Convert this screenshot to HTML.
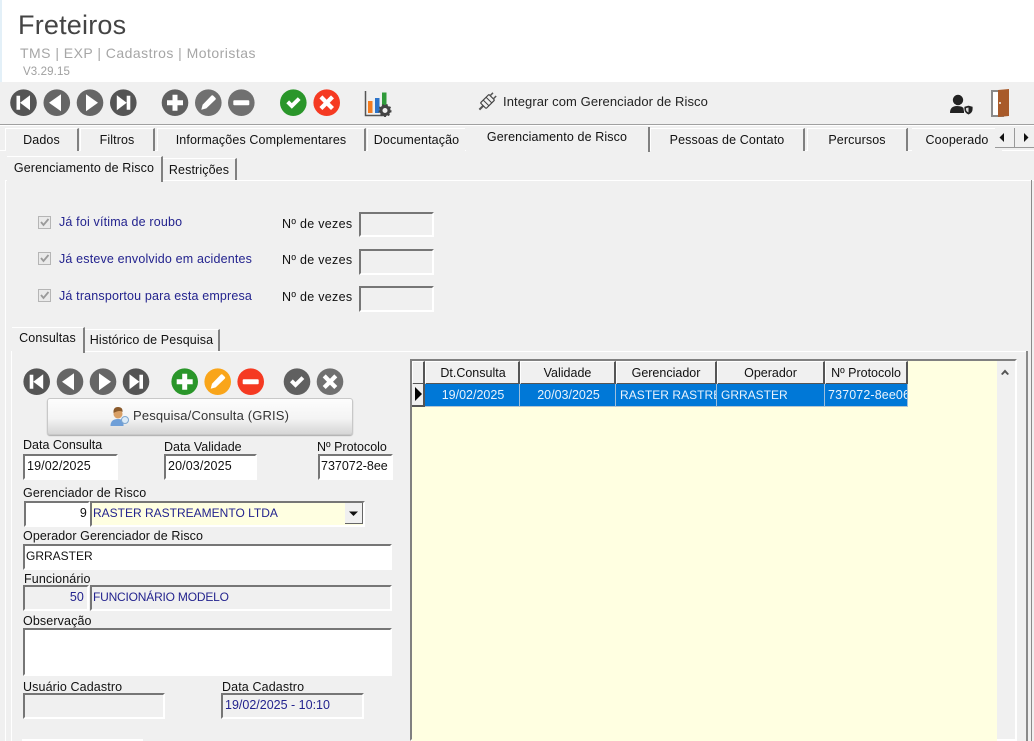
<!DOCTYPE html>
<html lang="pt"><head><meta charset="utf-8"><title>Freteiros</title>
<style>
html,body{margin:0;padding:0;background:#f0f0f0}
#p{position:relative;width:1034px;height:741px;overflow:hidden;background:#f0f0f0;font:12.5px "Liberation Sans",sans-serif;letter-spacing:.12px;color:#111;filter:blur(.35px)}
#p div{position:absolute;white-space:nowrap;box-sizing:border-box}
.t{line-height:14px}
.b{color:#23238e}
.f{background:#fff;border:2px solid;border-color:#767676 #fff #fff #767676;line-height:20px;padding-left:2px;height:24px;overflow:hidden}
.d{background:#f0f0f0;color:#23238e}
.tab{background:#f0f0f0;border-top:1px solid #fff;border-left:1px solid #fff;border-right:2px solid #808080;text-align:center;line-height:22px}
.th{background:#f0f0f0;border-top:1px solid #fff;border-left:1px solid #fff;border-right:2px solid #555;border-bottom:2px solid #555;text-align:center;line-height:22px;height:24px;top:361px;overflow:hidden}
.td{top:384px;height:23px;background:#0078d7;color:#e8f2fc;border-right:1px solid #9dbfdc;border-bottom:1px solid #b5c5d0;line-height:23px;text-align:center;overflow:hidden}
svg{position:absolute;left:0;top:0}
</style></head><body><div id="p">
<div style="left:0;top:0;width:1034px;height:82px;background:#fff"></div>
<div style="left:0;top:0;width:2px;height:82px;background:#e3f0f8"></div>
<div class="t" style="left:18px;top:9px;font-size:27px;line-height:32px;color:#444;letter-spacing:.2px">Freteiros</div>
<div class="t" style="left:20px;top:45px;font-size:14px;line-height:16px;color:#a6a6a6;letter-spacing:.47px">TMS | EXP | Cadastros | Motoristas</div>
<div class="t" style="left:23px;top:65px;font-size:11.5px;color:#a0a0a0">V3.29.15</div>

<div style="left:0;top:124px;width:1034px;height:1px;background:#a0a0a0"></div>
<div style="left:0;top:125px;width:1034px;height:1px;background:#fff"></div>

<div class="t" style="left:503px;top:95px;color:#222;font-size:13px;letter-spacing:.08px">Integrar com Gerenciador de Risco</div>

<div style="left:0;top:150px;width:1034px;height:1px;background:#fff"></div>
<div class="tab" style="left:5px;top:128px;width:74px;height:23px">Dados</div>
<div class="tab" style="left:80px;top:128px;width:75px;height:23px">Filtros</div>
<div class="tab" style="left:157px;top:128px;width:209px;height:23px">Informações Complementares</div>
<div class="tab" style="left:367px;top:128px;width:98px;height:23px;border-right:0">Documentação</div>
<div class="tab" style="left:466px;top:127px;width:184px;height:25px;border-top:0;border-left:0;line-height:20px">Gerenciamento de Risco</div>
<div class="tab" style="left:650px;top:128px;width:155px;height:23px">Pessoas de Contato</div>
<div class="tab" style="left:807px;top:128px;width:101px;height:23px">Percursos</div>
<div class="tab" style="left:912px;top:128px;width:90px;height:23px;border-right:0;border-left:0">Cooperado</div>
<div style="left:907px;top:128px;width:1px;height:23px;background:#808080"></div>
<div style="left:995px;top:128px;width:39px;height:20px;background:#f0f0f0;border-bottom:1px solid #999"></div>
<div style="left:1014px;top:128px;width:1px;height:19px;background:#999"></div>

<div style="left:5px;top:180px;width:1029px;height:1px;background:#fff"></div>
<div style="left:5px;top:180px;width:1px;height:561px;background:#fff"></div>
<div style="left:7px;top:156px;width:156px;height:26px;background:#f0f0f0;border-right:2px solid #808080;text-align:center;line-height:22px;border-top:1px solid #fff">Gerenciamento de Risco</div>
<div style="left:163px;top:158px;width:74px;height:22px;border-right:2px solid #808080;border-top:1px solid #fff;text-align:center;line-height:22px">Restrições</div>

<div class="t b" style="left:59px;top:215px;letter-spacing:.17px">Já foi vítima de roubo</div>
<div class="t b" style="left:59px;top:252px;letter-spacing:.17px">Já esteve envolvido em acidentes</div>
<div class="t b" style="left:59px;top:289px;letter-spacing:.17px">Já transportou para esta empresa</div>
<div class="t" style="left:282px;top:217px;letter-spacing:.3px">Nº de vezes</div>
<div class="t" style="left:282px;top:253px;letter-spacing:.3px">Nº de vezes</div>
<div class="t" style="left:282px;top:290px;letter-spacing:.3px">Nº de vezes</div>
<div class="f d" style="left:359px;top:212px;width:75px;height:25px"></div>
<div class="f d" style="left:359px;top:249px;width:75px;height:26px"></div>
<div class="f d" style="left:359px;top:286px;width:75px;height:26px"></div>

<div style="left:11px;top:351px;width:1015px;height:1px;background:#fff"></div>
<div style="left:11px;top:351px;width:1px;height:390px;background:#fff"></div>
<div style="left:12px;top:327px;width:73px;height:26px;background:#f0f0f0;border-right:2px solid #808080;border-top:1px solid #fff;text-align:center;line-height:21px">Consultas</div>
<div style="left:85px;top:329px;width:135px;height:22px;border-right:2px solid #808080;border-top:1px solid #fff;text-align:center;line-height:21px">Histórico de Pesquisa</div>

<div style="left:47px;top:398px;width:306px;height:37px;border:1px solid #c8c8c8;border-radius:3px;background:linear-gradient(#fdfdfd,#f4f4f4 55%,#d6d6d6);box-shadow:0 1px 1px #aaa"></div>
<div class="t" style="left:133px;top:409px;color:#333;font-size:13px;letter-spacing:.15px">Pesquisa/Consulta (GRIS)</div>

<div class="t" style="left:23px;top:438px;letter-spacing:0">Data Consulta</div>
<div class="t" style="left:164px;top:440px;letter-spacing:0">Data Validade</div>
<div class="t" style="left:317px;top:440px;letter-spacing:0">Nº Protocolo</div>
<div class="f" style="left:23px;top:454px;width:95px;height:26px">19/02/2025</div>
<div class="f" style="left:164px;top:454px;width:93px;height:26px">20/03/2025</div>
<div class="f" style="left:318px;top:454px;width:75px;height:26px;letter-spacing:0;padding-left:1px">737072-8ee</div>
<div class="t" style="left:23px;top:486px">Gerenciador de Risco</div>
<div class="f" style="left:24px;top:501px;width:66px;height:26px;text-align:right;padding:0 1px 0 0">9</div>
<div class="f" style="left:90px;top:501px;width:275px;height:26px;background:#ffffe1;color:#23238e;font-size:12px;letter-spacing:0;padding-left:1px">RASTER RASTREAMENTO LTDA</div>
<div style="left:345px;top:503px;width:18px;height:21px;background:#f0f0f0;border-right:1px solid #666;border-bottom:1px solid #666"></div>
<div class="t" style="left:23px;top:529px;letter-spacing:.1px">Operador Gerenciador de Risco</div>
<div class="f" style="left:23px;top:544px;width:369px;height:26px;padding-left:1px;font-size:12px;letter-spacing:0">GRRASTER</div>
<div class="t" style="left:24px;top:572px">Funcionário</div>
<div class="f d" style="left:23px;top:585px;width:66px;height:26px;text-align:right;padding:0 3px 0 0">50</div>
<div class="f d" style="left:90px;top:585px;width:302px;height:26px;font-size:12px;letter-spacing:-.2px;padding-left:1px">FUNCIONÁRIO MODELO</div>
<div class="t" style="left:23px;top:614px">Observação</div>
<div class="f" style="left:23px;top:628px;width:369px;height:48px"></div>
<div class="t" style="left:23px;top:680px">Usuário Cadastro</div>
<div class="t" style="left:222px;top:680px">Data Cadastro</div>
<div class="f d" style="left:23px;top:693px;width:142px;height:26px"></div>
<div class="f d" style="left:221px;top:693px;width:143px;height:26px;padding-left:2px;letter-spacing:0">19/02/2025 - 10:10</div>
<div style="left:22px;top:739px;width:121px;height:2px;background:#fff"></div>

<!-- grid -->
<div style="left:410px;top:359px;width:607px;height:382px;background:#f0f0f0;border:2px solid;border-color:#808080 #fff #fff #808080"></div>
<div style="left:412px;top:361px;width:585px;height:380px;background:#ffffe1"></div>
<div class="th" style="left:412px;width:13px"></div>
<div class="th" style="left:425px;width:95px;letter-spacing:0;padding-left:2px">Dt.Consulta</div>
<div class="th" style="left:520px;width:96px;letter-spacing:0">Validade</div>
<div class="th" style="left:616px;width:101px;letter-spacing:0">Gerenciador</div>
<div class="th" style="left:717px;width:108px;letter-spacing:0">Operador</div>
<div class="th" style="left:825px;width:83px;letter-spacing:0">Nº Protocolo</div>
<div style="left:412px;top:384px;width:13px;height:23px;background:#f0f0f0;border-right:2px solid #555;border-bottom:2px solid #555"></div>
<div class="td" style="left:425px;width:95px;padding-left:2px;letter-spacing:0">19/02/2025</div>
<div class="td" style="left:520px;width:96px;padding-left:2px;letter-spacing:0">20/03/2025</div>
<div class="td" style="left:616px;width:101px;text-align:left;padding-left:4px;font-size:12px;letter-spacing:.05px">RASTER RASTREAMENTO</div>
<div class="td" style="left:717px;width:108px;text-align:left;padding-left:4px;font-size:12px;letter-spacing:0">GRRASTER</div>
<div class="td" style="left:825px;width:83px;text-align:left;padding-left:3px">737072-8ee06</div>
<div style="left:1026px;top:351px;width:2px;height:390px;background:#8a8a8a"></div>
<div style="left:1031px;top:180px;width:1px;height:561px;background:#8a8a8a"></div>

<svg width="1034" height="741" viewBox="0 0 1034 741">
<defs>
<g id="first"><path d="M-7-7h3.600v14H-7zM6.500-7.500v15L-3.400 0z" fill="#fff"/></g>
<g id="prev"><path d="M5-8.500v17L-7 0z" fill="#fff"/></g>
<g id="next"><path d="M-5-8.500v17L7 0z" fill="#fff"/></g>
<g id="last"><path d="M7-7H3.400v14H7zM-6.500-7.500v15L3.400 0z" fill="#fff"/></g>
<g id="plus"><path d="M-2.500-8h5v5.500H8v5H2.500V8h-5V2.500H-8v-5h5.500z" fill="#fff"/></g>
<g id="minus"><rect x="-8" y="-2.500" width="16" height="5" rx="1" fill="#fff"/></g>
<g id="pen"><path d="M-7 7l1.300-5L3-7q1-1 2 0l2 2q1 1 0 2L-2 5.700z" fill="#fff"/></g>
<g id="ok"><path d="M-7 .5l2.800-2.800L-1.500.4 4.500-5.500 7.300-2.700-1.500 6z" fill="#fff"/></g>
<g id="x"><path d="M-7.300-4.300l3-3L0-3l4.300-4.300 3 3L3 0l4.300 4.300-3 3L0 3l-4.300 4.300-3-3L-3 0z" fill="#fff"/></g>
</defs>
<!-- row 1 -->
<g><circle cx="23.500" cy="102.700" r="13.300" fill="#555"/><use href="#first" x="23.500" y="102.700"/>
<circle cx="56.800" cy="102.700" r="13.300" fill="#666"/><use href="#prev" x="56" y="102.700"/>
<circle cx="90" cy="102.700" r="13.300" fill="#666"/><use href="#next" x="91" y="102.700"/>
<circle cx="123.300" cy="102.700" r="13.300" fill="#555"/><use href="#last" x="123.300" y="102.700"/>
<circle cx="175" cy="102.700" r="13.300" fill="#606060"/><use href="#plus" x="175" y="102.700"/>
<circle cx="208.300" cy="102.700" r="13.300" fill="#707070"/><use href="#pen" x="208.300" y="102.700"/>
<circle cx="241.300" cy="102.700" r="13.300" fill="#707070"/><use href="#minus" x="241.300" y="102.700"/>
<circle cx="293.300" cy="102.700" r="13.300" fill="#2a962a"/><use href="#ok" x="293.300" y="102.700"/>
<circle cx="326.700" cy="102.700" r="13.300" fill="#f53a22"/><use href="#x" x="326.700" y="102.700"/></g>
<!-- chart -->
<path d="M365.500 91v24.500H384" fill="none" stroke="#555" stroke-width="1.500"/>
<rect x="368" y="101" width="4.500" height="12" fill="#f57c1f"/><rect x="375" y="98" width="4.500" height="15" fill="#2d74c9"/><rect x="382" y="92.500" width="4.500" height="14" fill="#2f9a3a"/>
<circle cx="385" cy="110.500" r="4" fill="none" stroke="#444" stroke-width="3"/><circle cx="385" cy="110.500" r="5.800" fill="none" stroke="#444" stroke-width="1.500" stroke-dasharray="2 2"/>
<!-- plug -->
<g transform="translate(487.500 101.500) rotate(-45)"><rect x="-11.500" y="-1" width="5.500" height="2" fill="#555"/><rect x="-6" y="-4" width="12" height="8" rx="1" fill="#f0f0f0" stroke="#444" stroke-width="1.200"/><path d="M-2-4v8M2-4v8" stroke="#444"/><rect x="6" y="-3" width="4" height="1.500" fill="#555"/><rect x="6" y="1.500" width="4" height="1.500" fill="#555"/></g>
<!-- user shield -->
<circle cx="958" cy="100" r="5.200" fill="#222"/><path d="M950 113q0-7 7-7 6 0 7 3v4z" fill="#222"/>
<path d="M964 106.500l4.500-1.200 4.500 1.200v2.500q0 4-4.500 6-4.500-2-4.500-6z" fill="#222" stroke="#f0f0f0" stroke-width=".8"/><path d="M968.500 107.500v5q-2.500-1-2.500-3.200v-1.200z" fill="#ddd"/>
<!-- door -->
<path d="M992 91h11v25h-11z" fill="#fff" stroke="#8a8a8a" stroke-width="2"/><path d="M998 90l11-1v27l-11 1z" fill="#a85a2a"/><rect x="999" y="102" width="2" height="2" fill="#e6d0bf"/>
<!-- scroll arrows -->
<path d="M1004 133v9l-4.500-4.500z" fill="#111"/><path d="M1024 133v9l4.500-4.500z" fill="#111"/>
<!-- checks -->
<g fill="#eaeaea" stroke="#b5b5b5"><rect x="38.500" y="216.500" width="12" height="12"/><rect x="38.500" y="252.500" width="12" height="12"/><rect x="38.500" y="289.500" width="12" height="12"/></g>
<g fill="none" stroke="#9a9a9a" stroke-width="1.800"><path d="M41 222l2.500 3 5-6"/><path d="M41 258l2.500 3 5-6"/><path d="M41 295l2.500 3 5-6"/></g>
<!-- row 2 -->
<g><circle cx="36.700" cy="381.700" r="13.300" fill="#555"/><use href="#first" x="36.700" y="381.700"/>
<circle cx="70" cy="381.700" r="13.300" fill="#666"/><use href="#prev" x="69" y="381.700"/>
<circle cx="103" cy="381.700" r="13.300" fill="#666"/><use href="#next" x="104" y="381.700"/>
<circle cx="136" cy="381.700" r="13.300" fill="#555"/><use href="#last" x="136" y="381.700"/>
<circle cx="184.700" cy="381.700" r="13.300" fill="#2a962a"/><use href="#plus" x="184.700" y="381.700"/>
<circle cx="217.700" cy="381.700" r="13.300" fill="#f9a51a"/><use href="#pen" x="217.700" y="381.700"/>
<circle cx="250.700" cy="381.700" r="13.300" fill="#f53a22"/><use href="#minus" x="250.700" y="381.700"/>
<circle cx="297" cy="381.700" r="13.300" fill="#606060"/><use href="#ok" x="297" y="381.700"/>
<circle cx="330" cy="381.700" r="13.300" fill="#707070"/><use href="#x" x="330" y="381.700"/></g>
<!-- person search -->
<circle cx="118" cy="414" r="4.500" fill="#d9a066"/><path d="M113.500 413q-.5-6 4.500-6 5 0 4.500 5-3-2.500-9 1z" fill="#8a5a2b"/><path d="M110.500 426q0-7 7.500-7 4 0 5.500 2v5z" fill="#6f9fd8"/><circle cx="125" cy="420" r="3.500" fill="#dcebf8" stroke="#7fa7cf"/>
<!-- combo arrow, row pointer, scroll up -->
<path d="M349 511.500h9l-4.500 4.500z" fill="#111"/>
<path d="M415 387v14l7-7z" fill="#000"/>
<path d="M1001 374l4-4.500 4 4.500-1.500 1-2.500-2.500-2.500 2.500z" fill="#555"/>
</svg>
</div></body></html>
